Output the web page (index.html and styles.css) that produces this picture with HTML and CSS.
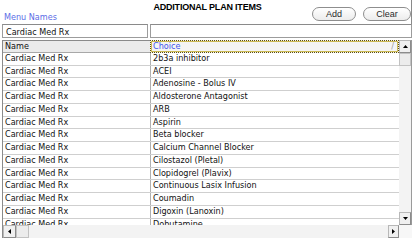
FILE: index.html
```html
<!DOCTYPE html>
<html>
<head>
<meta charset="utf-8">
<title>Additional Plan Items</title>
<link rel="stylesheet" href="styles.css">
</head>
<body>
<div class="app">
  <div class="top">
    <div class="title">ADDITIONAL PLAN ITEMS</div>
    <div class="menu-label">Menu Names</div>
    <div class="buttons">
      <button class="btn btn-add">Add</button>
      <button class="btn btn-clear">Clear</button>
    </div>
  </div>
  <div class="filters">
    <div class="field field-name">Cardiac Med Rx</div>
    <div class="field field-choice"></div>
  </div>
  <div class="grid">
    <div class="table">
      <div class="row head">
        <div class="cell c1">Name</div>
        <div class="cell c2 sorted"><span class="head-text">Choice</span><span class="sort">/</span></div>
      </div>
      <div class="row"><div class="cell c1">Cardiac Med Rx</div><div class="cell c2">2b3a inhibitor</div></div>
      <div class="row"><div class="cell c1">Cardiac Med Rx</div><div class="cell c2">ACEI</div></div>
      <div class="row"><div class="cell c1">Cardiac Med Rx</div><div class="cell c2">Adenosine - Bolus IV</div></div>
      <div class="row"><div class="cell c1">Cardiac Med Rx</div><div class="cell c2">Aldosterone Antagonist</div></div>
      <div class="row"><div class="cell c1">Cardiac Med Rx</div><div class="cell c2">ARB</div></div>
      <div class="row"><div class="cell c1">Cardiac Med Rx</div><div class="cell c2">Aspirin</div></div>
      <div class="row"><div class="cell c1">Cardiac Med Rx</div><div class="cell c2">Beta blocker</div></div>
      <div class="row"><div class="cell c1">Cardiac Med Rx</div><div class="cell c2">Calcium Channel Blocker</div></div>
      <div class="row"><div class="cell c1">Cardiac Med Rx</div><div class="cell c2">Cilostazol (Pletal)</div></div>
      <div class="row"><div class="cell c1">Cardiac Med Rx</div><div class="cell c2">Clopidogrel (Plavix)</div></div>
      <div class="row"><div class="cell c1">Cardiac Med Rx</div><div class="cell c2">Continuous Lasix Infusion</div></div>
      <div class="row"><div class="cell c1">Cardiac Med Rx</div><div class="cell c2">Coumadin</div></div>
      <div class="row"><div class="cell c1">Cardiac Med Rx</div><div class="cell c2">Digoxin (Lanoxin)</div></div>
      <div class="row"><div class="cell c1">Cardiac Med Rx</div><div class="cell c2">Dobutamine</div></div>
    </div>
    <div class="vscroll">
      <div class="sbtn"><svg width="5" height="3" viewBox="0 0 5 3"><path d="M0 3L2.5 0L5 3Z"/></svg></div>
      <div class="thumb"></div>
      <div class="track"></div>
      <div class="sbtn"><svg width="5" height="3" viewBox="0 0 5 3"><path d="M0 0L2.5 3L5 0Z"/></svg></div>
    </div>
    <div class="hscroll">
      <div class="sbtn"><svg width="3" height="5" viewBox="0 0 3 5"><path d="M3 0L0 2.5L3 5Z"/></svg></div>
      <div class="thumb"></div>
      <div class="track"></div>
      <div class="sbtn sbtn-right"><svg width="3" height="5" viewBox="0 0 3 5"><path d="M0 0L3 2.5L0 5Z"/></svg></div>
    </div>
    <div class="corner"></div>
  </div>
</div>
</body>
</html>
```

FILE: styles.css
```css
html, body {
  margin: 0;
  padding: 0;
  background: #ffffff;
}

body {
  font-family: "DejaVu Sans", sans-serif;
  font-size: 8.1px;
  color: #111111;
}

.app {
  width: 416px;
  height: 240px;
  overflow: hidden;
}

/* ---------- header panel ---------- */
.top {
  width: 411px;
  height: 24px;
  border-right: 1px solid #8a8a8a;
  display: grid;
  grid-template-columns: 1fr auto;
  grid-template-rows: 12px 12px;
}

.title {
  grid-area: 1 / 1 / 2 / 3;
  text-align: center;
  padding: 2px 0 0 4px;
  font-family: "Liberation Sans", Arial, sans-serif;
  font-weight: bold;
  font-size: 9px;
  letter-spacing: -0.2px;
  line-height: 10px;
  color: #000000;
}

.menu-label {
  grid-area: 2 / 1 / 3 / 2;
  padding-left: 4px;
  line-height: 10px;
  color: #5b6de6;
}

.buttons {
  grid-area: 1 / 2 / 3 / 3;
  display: flex;
  gap: 7px;
  padding-top: 7px;
  align-items: flex-start;
}

.btn {
  box-sizing: border-box;
  height: 14px;
  margin: 0;
  padding: 0;
  border: 1px solid #8e8e8e;
  border-radius: 7px;
  background: linear-gradient(#ffffff, #ececec);
  font-family: "Liberation Sans", Arial, sans-serif;
  font-size: 9px;
  line-height: 12px;
  color: #2a2a2a;
}

.btn-add {
  width: 44px;
}

.btn-clear {
  width: 48px;
}

/* ---------- filter inputs ---------- */
.filters {
  display: flex;
  height: 14px;
  margin-bottom: 2px;
}

.field {
  box-sizing: border-box;
  height: 14px;
  border: 1px solid #9c9c9c;
  border-top-color: #8a8a8a;
  background: #ffffff;
  padding: 1px 0 0 3px;
  line-height: 12px;
  overflow: hidden;
  white-space: nowrap;
}

.field-name {
  margin-left: 2px;
  width: 146px;
}

.field-choice {
  margin-left: 2px;
  width: 262px;
}

/* ---------- data grid ---------- */
.grid {
  margin-left: 2px;
  width: 410px;
  height: 198px;
  display: grid;
  grid-template-columns: 397px 13px;
  grid-template-rows: 185px 13px;
}

.table {
  border-left: 1px solid #8a8a8a;
  overflow: hidden;
  background: #ffffff;
}

.row {
  display: flex;
  box-sizing: border-box;
  height: 12.75px;
  border-bottom: 1px solid #cfcfcf;
  line-height: 11.75px;
  white-space: nowrap;
}

.cell {
  overflow: hidden;
}

.c1 {
  width: 147px;
  padding-left: 2px;
  box-sizing: border-box;
}

.c2 {
  flex: 1;
  border-left: 1px solid #b0b0b0;
  padding-left: 2px;
}

.row.head {
  border-top: 1px solid #8a8a8a;
  border-bottom: 1px solid #a8a8a8;
  line-height: 10.75px;
  background: #ebebeb;
}

.c2.sorted {
  display: flex;
  justify-content: space-between;
  box-sizing: border-box;
  margin-top: -1px;
  height: 12.75px;
  border: 1px dotted #5e5010;
  box-shadow: inset 0 0 0 1px #cdbb55;
  background: #f4f4f4;
  padding: 0 4px 0 2px;
}

.head-text {
  color: #4356ec;
}

.sort {
  color: #9a9a9a;
}

/* ---------- scrollbars ---------- */
.vscroll {
  display: flex;
  flex-direction: column;
  background: #f3f3f3;
  border-right: 1px solid #9a9a9a;
}

.hscroll {
  display: flex;
  background: #f3f3f3;
  border-left: 1px solid #8a8a8a;
}

.sbtn {
  box-sizing: border-box;
  flex: 0 0 13px;
  width: 13px;
  height: 13px;
  display: flex;
  align-items: center;
  justify-content: center;
  background: #f0f0f0;
  border: 1px solid #b8b8b8;
  border-right-color: #8c8c8c;
  border-bottom-color: #8c8c8c;
}

.vscroll .sbtn {
  width: 12px;
}

.sbtn-right {
  flex-basis: 11px;
  width: 11px;
}

.sbtn svg {
  display: block;
  fill: #000000;
}

.thumb {
  box-sizing: border-box;
  flex: 0 0 13px;
  width: 13px;
  height: 13px;
  background: #ececec;
  border: 1px solid #c2c2c2;
}

.vscroll .thumb {
  width: 12px;
}

.track {
  flex: 1;
}

.corner {
  background: #f7f7f7;
}
```
